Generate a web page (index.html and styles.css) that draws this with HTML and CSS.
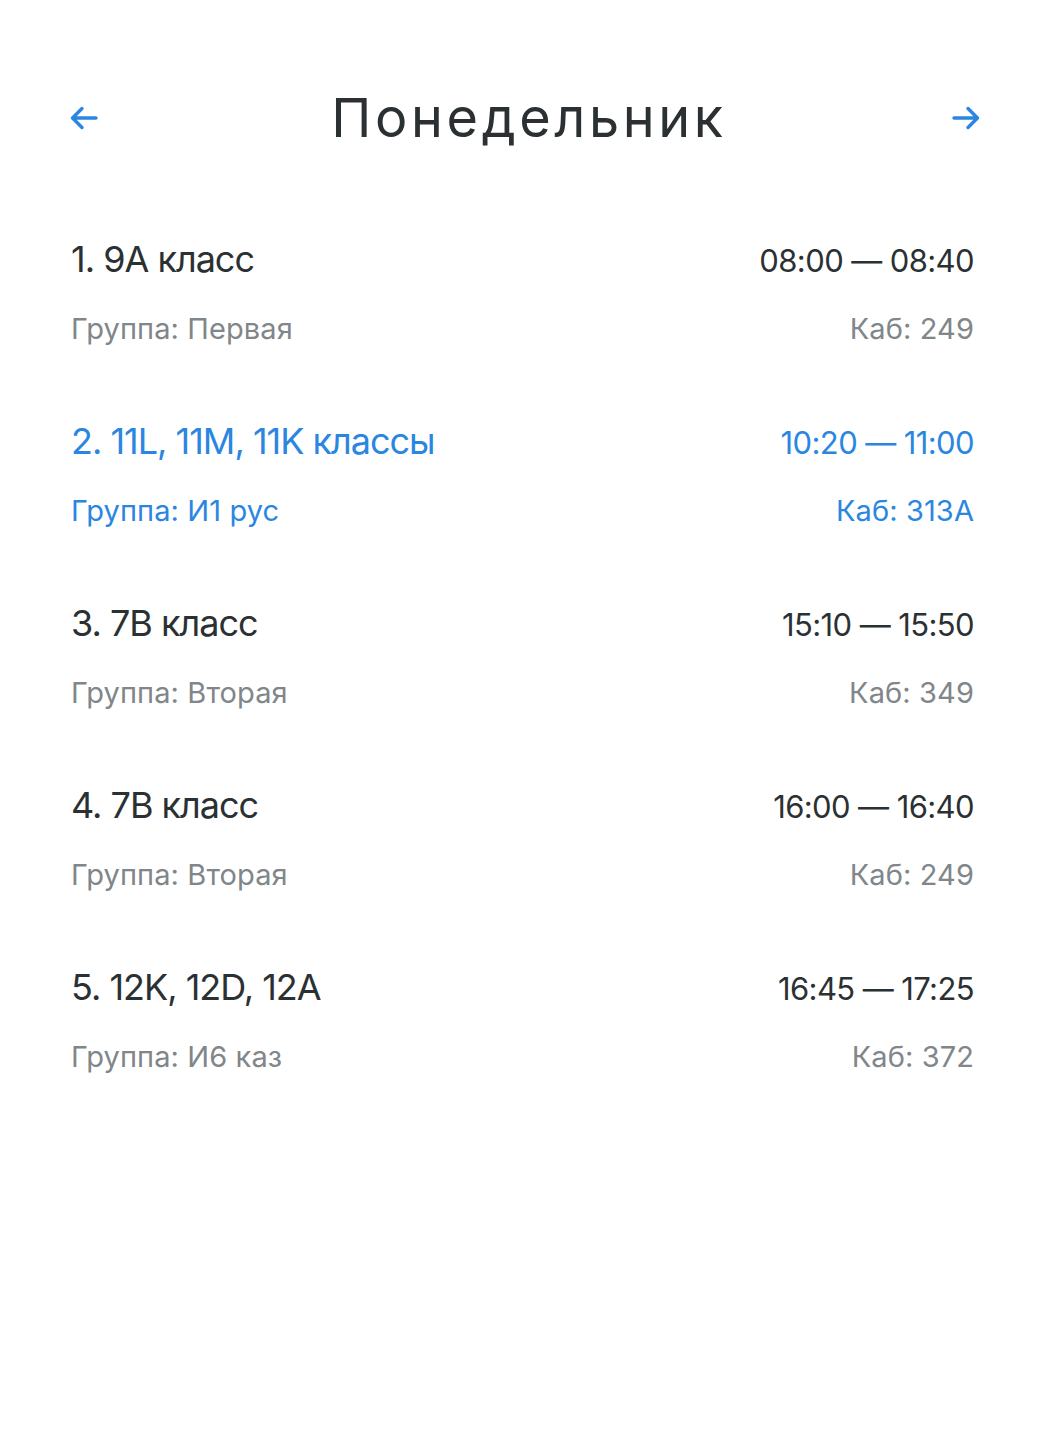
FILE: index.html
```html
<!DOCTYPE html>
<html lang="ru">
<head>
<meta charset="utf-8">
<link rel="stylesheet" href="styles.css">
</head>
<body>
<div class="page">
  <header class="header">
    <button class="nav" aria-label="Назад">
      <svg width="32" height="32" viewBox="0 0 32 32"><path d="M28 16H5M14 6.5L4.5 16 14 25.5" fill="none" stroke="#2a86e0" stroke-width="3.4" stroke-linecap="round" stroke-linejoin="round"/></svg>
    </button>
    <h1 class="title">Понедельник</h1>
    <button class="nav" aria-label="Вперёд">
      <svg width="32" height="32" viewBox="0 0 32 32"><path d="M4 16H27M18 6.5L27.5 16 18 25.5" fill="none" stroke="#2a86e0" stroke-width="3.4" stroke-linecap="round" stroke-linejoin="round"/></svg>
    </button>
  </header>
  <ul class="lessons">
    <li class="lesson">
      <div class="row"><span class="name">1. 9A класс</span><span class="time">08:00 — 08:40</span></div>
      <div class="row sub"><span>Группа: Первая</span><span>Каб: 249</span></div>
    </li>
    <li class="lesson active">
      <div class="row"><span class="name">2. 11L, 11M, 11K классы</span><span class="time">10:20 — 11:00</span></div>
      <div class="row sub"><span>Группа: И1 рус</span><span>Каб: 313A</span></div>
    </li>
    <li class="lesson">
      <div class="row"><span class="name">3. 7B класс</span><span class="time">15:10 — 15:50</span></div>
      <div class="row sub"><span>Группа: Вторая</span><span>Каб: 349</span></div>
    </li>
    <li class="lesson">
      <div class="row"><span class="name">4. 7B класс</span><span class="time">16:00 — 16:40</span></div>
      <div class="row sub"><span>Группа: Вторая</span><span>Каб: 249</span></div>
    </li>
    <li class="lesson">
      <div class="row"><span class="name">5. 12K, 12D, 12A</span><span class="time">16:45 — 17:25</span></div>
      <div class="row sub"><span>Группа: И6 каз</span><span>Каб: 372</span></div>
    </li>
  </ul>
</div>
</body>
</html>
```
FILE: styles.css
```css
* { box-sizing: border-box; }
html, body { margin: 0; padding: 0; background: #ffffff; }
body { font-family: Inter, "Noto Sans", sans-serif; color: #2b3133; }
.page { padding: 86px 70px 0 68px; }
.header { display: flex; align-items: center; justify-content: space-between; height: 64px; }
.nav { border: 0; background: none; padding: 0; width: 32px; height: 32px; display: flex; }
.title { margin: 0 0 0 8px; font-weight: 400; font-size: 54px; letter-spacing: 3.6px; color: #2b3133; line-height: 64px; }
.lessons { list-style: none; margin: 0; padding: 0; margin-top: 87px; }
.lesson { height: 182px; padding-left: 3px; padding-right: 8px; }
.row { display: flex; justify-content: space-between; align-items: baseline; }
.name { font-size: 36px; letter-spacing: -1px; line-height: 44px; }
.time { font-size: 31px; letter-spacing: -0.6px; line-height: 44px; }
.sub { margin-top: 29px; font-size: 29px; letter-spacing: 0.1px; color: #80868a; line-height: 34px; }
.active, .active .sub { color: #2a86e0; }
```
